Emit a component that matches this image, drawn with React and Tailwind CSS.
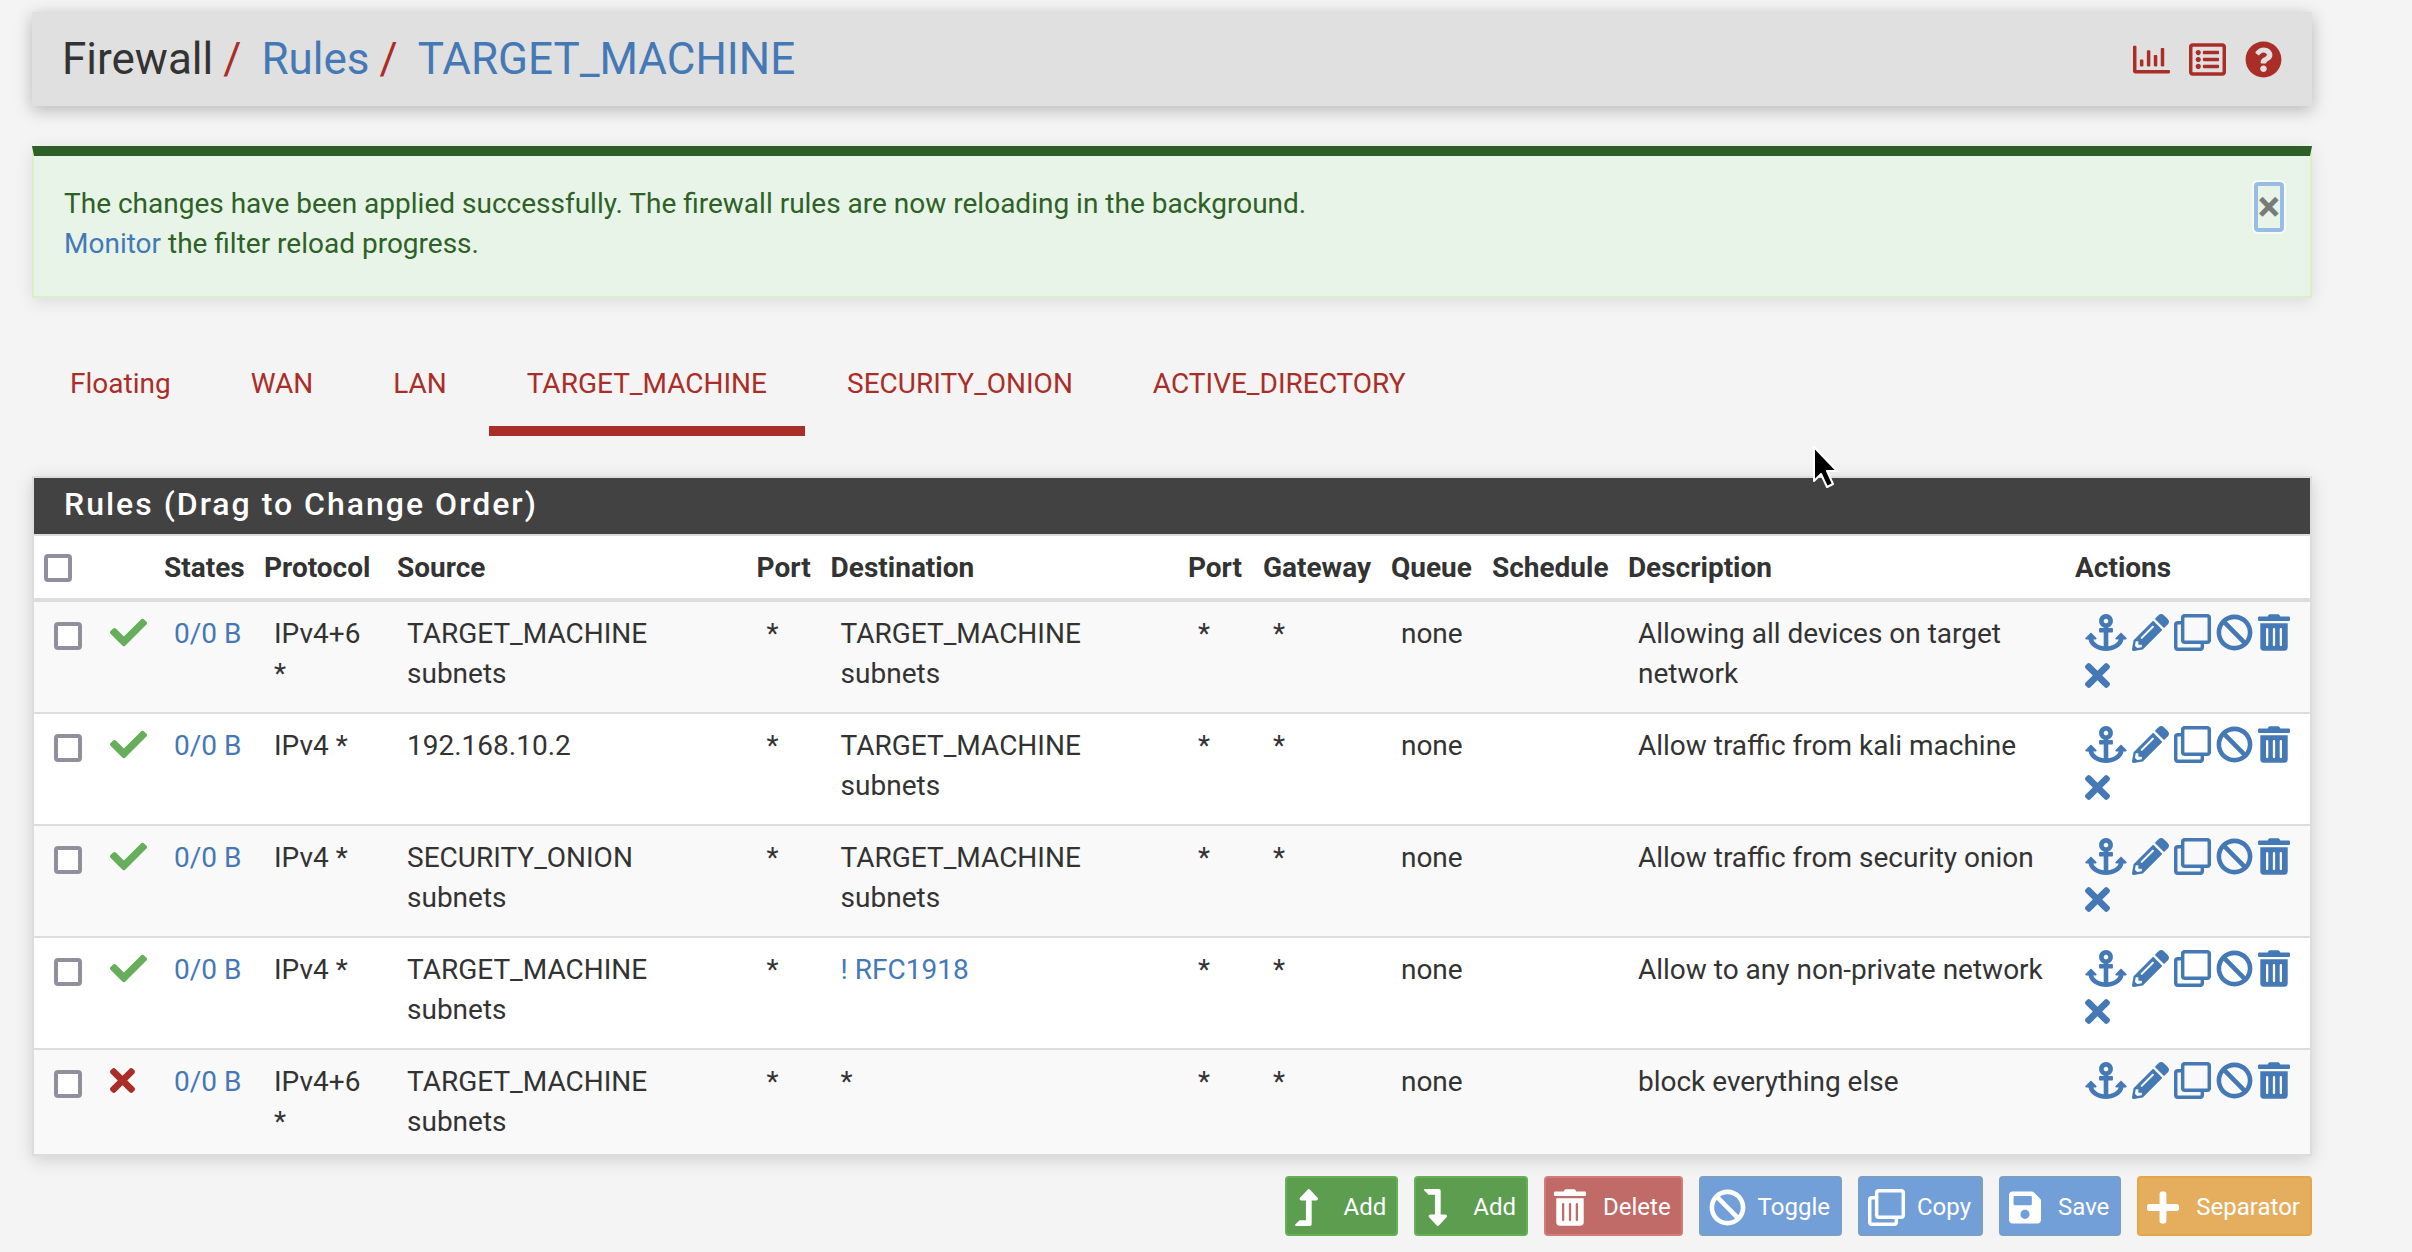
import {
  FaAnchor,
  FaBan,
  FaCheck,
  FaLevelDownAlt,
  FaLevelUpAlt,
  FaPencilAlt,
  FaPlus,
  FaQuestionCircle,
  FaRegChartBar,
  FaRegClone,
  FaRegListAlt,
  FaSave,
  FaTimes,
  FaTrashAlt,
} from "react-icons/fa";

const tabs = ["Floating", "WAN", "LAN", "TARGET_MACHINE", "SECURITY_ONION", "ACTIVE_DIRECTORY"];

const columns = [
  { label: "States", width: "w-[100px]" },
  { label: "Protocol", width: "w-[133px]" },
  { label: "Source", width: "w-[15.8%]" },
  { label: "Port", width: "w-[74px]" },
  { label: "Destination", width: "w-[15.7%]" },
  { label: "Port", width: "w-[75px]" },
  { label: "Gateway", width: "w-[128px]" },
  { label: "Queue", width: "w-[101px]" },
  { label: "Schedule", width: "w-[136px]" },
  { label: "Description", width: "" },
  { label: "Actions", width: "w-[245px]" },
];

const rules = [
  { pass: true, protocol: "IPv4+6 *", source: "TARGET_MACHINE subnets", destination: "TARGET_MACHINE subnets", description: "Allowing all devices on target network" },
  { pass: true, protocol: "IPv4 *", source: "192.168.10.2", destination: "TARGET_MACHINE subnets", description: "Allow traffic from kali machine" },
  { pass: true, protocol: "IPv4 *", source: "SECURITY_ONION subnets", destination: "TARGET_MACHINE subnets", description: "Allow traffic from security onion" },
  { pass: true, protocol: "IPv4 *", source: "TARGET_MACHINE subnets", destination: "! RFC1918", link: true, description: "Allow to any non-private network" },
  { pass: false, protocol: "IPv4+6 *", source: "TARGET_MACHINE subnets", destination: "*", description: "block everything else" },
];

const actions = [
  { label: "Add", name: "Add rule to the top", Icon: FaLevelUpAlt, size: "w-[23px]", color: "bg-[#5c9d50] border-[#65b057]" },
  { label: "Add", name: "Add rule to the end", Icon: FaLevelDownAlt, size: "w-[23px]", color: "bg-[#5c9d50] border-[#65b057]" },
  { label: "Delete", name: "Delete", Icon: FaTrashAlt, size: "w-[32px]", color: "bg-[#c16b68] border-[#d37b76]" },
  { label: "Toggle", name: "Toggle", Icon: FaBan, size: "w-[37px]", color: "bg-[#739fd9] border-[#7a9fc4]" },
  { label: "Copy", name: "Copy", Icon: FaRegClone, size: "w-[37px]", color: "bg-[#739fd9] border-[#7a9fc4]" },
  { label: "Save", name: "Save", Icon: FaSave, size: "w-[32px]", color: "bg-[#739fd9] border-[#7a9fc4]" },
  { label: "Separator", name: "Separator", Icon: FaPlus, size: "w-[32px]", color: "bg-[#e5ae5f] border-[#e5a54b]" },
];

const rowActions = [
  { name: "Add associated states", Icon: FaAnchor, size: "w-[42px]" },
  { name: "Edit", Icon: FaPencilAlt, size: "w-[37px]" },
  { name: "Copy", Icon: FaRegClone, size: "w-[37px]" },
  { name: "Disable", Icon: FaBan, size: "w-[37px]" },
  { name: "Delete", Icon: FaTrashAlt, size: "w-[32px]" },
];

function IconLink({ name, Icon, size = "w-[37px]" }) {
  return (
    <a href="#" aria-label={name} title={name} className="block">
      <Icon className={`${size} h-[37px]`} />
    </a>
  );
}

function CheckBox({ label }) {
  return (
    <input
      type="checkbox"
      aria-label={label}
      className="block size-7 appearance-none rounded-sm border-4 border-[#8f8f9d] bg-white checked:bg-[#4479b6]"
    />
  );
}

function Cursor() {
  return (
    <svg viewBox="0 0 27 44" className="pointer-events-none absolute -top-[33px] right-[471px] h-11 w-[27px]" aria-hidden="true">
      <path d="M2 2v34l7-7 6 13 6-3-6-13h10z" fill="#000" stroke="#fff" strokeWidth="2" strokeLinejoin="round" />
    </svg>
  );
}

export default function App() {
  return (
    <div className="min-h-screen bg-[#f4f4f4] pt-3 pr-[100px] pb-4 pl-8 font-[Roboto,sans-serif] text-[28px] leading-10 text-[#333]">
      <header className="flex items-center justify-between bg-[#e0e0e0] py-[22px] pr-[30px] pl-[30px] shadow-[0_4px_16px_rgba(0,0,0,0.26)]">
        <h1 className="flex text-[44px] leading-[50px]">
          <span>Firewall</span>
          <span className="mr-5 ml-2.5 text-[#aa2e28]">/</span>
          <a href="#" className="text-[#4479b6]">Rules</a>
          <span className="mr-5 ml-2.5 text-[#aa2e28]">/</span>
          <a href="#" className="text-[#4479b6]">TARGET_MACHINE</a>
        </h1>
        <nav className="flex gap-[19px] text-[#aa2e28]" aria-label="Page tools">
          <IconLink name="Status" Icon={FaRegChartBar} />
          <IconLink name="Log" Icon={FaRegListAlt} />
          <IconLink name="Help" Icon={FaQuestionCircle} />
        </nav>
      </header>

      <div
        role="alert"
        className="mt-10 flex items-start justify-between border-2 border-t-[10px] border-[#dcedc8] border-t-[#2d5f26] bg-[#e8f4e8] pt-7 pr-[26px] pb-8 pl-[30px] text-[#2d6126] shadow-[0_4px_16px_rgba(0,0,0,0.1)]"
      >
        <p>
          The changes have been applied successfully. The firewall rules are now reloading in the background.
          <br />
          <a href="#" className="text-[#4479b6]">Monitor</a> the filter reload progress.
        </p>
        <button
          type="button"
          aria-label="Close"
          className="-mt-0.5 h-[50px] w-[30px] rounded-sm border-4 border-[#99bce5] text-center text-[42px] leading-[42px] font-bold text-[#777d76] outline-2 outline-white/60"
        >
          <span className="-mx-2 block">×</span>
        </button>
      </div>

      <nav className="mt-11 flex gap-1" aria-label="Interfaces">
        {tabs.map((tab) => (
          <a
            key={tab}
            href="#"
            aria-current={tab === "TARGET_MACHINE" ? "page" : undefined}
            className={
              tab === "TARGET_MACHINE"
                ? "border-b-[10px] border-[#aa2e28] px-[38px] py-[22px] text-[#aa2e28]"
                : "border-b-[10px] border-transparent px-[38px] py-[22px] text-[#aa2e28]"
            }
          >
            {tab}
          </a>
        ))}
      </nav>

      <section className="relative mt-10 border-2 border-[#dddddd] bg-white shadow-[0_4px_16px_rgba(0,0,0,0.15)]">
        <Cursor />
        <h2 className="border-b-2 border-[#dddddd] bg-[#424242] pt-1 pb-2 pl-[30px]">
          <span className="block text-[32px] leading-[44px] font-medium tracking-[2px] text-white">Rules (Drag to Change Order)</span>
        </h2>
        <table className="w-full table-fixed border-collapse text-left">
          <thead>
            <tr className="border-b-4 border-[#dddddd]">
              <th className="w-[56px] pt-3 pb-2.5 pl-2.5">
                <CheckBox label="Select all rules" />
              </th>
              <th className="w-[64px]" />
              {columns.map((c, i) => (
                <th key={i} className={`${c.width} pt-3 pb-2.5 pl-2.5 font-bold`}>
                  {c.label}
                </th>
              ))}
            </tr>
          </thead>
          <tbody>
            {rules.map((r, i) => (
              <tr key={i} className="border-b-2 border-[#dddddd] align-top odd:bg-[#f9f9f9] last:border-b-0">
                <td className="pt-5 pl-5">
                  <CheckBox label={`Select rule ${i + 1}`} />
                </td>
                <td className="pt-3 pl-5">
                  {r.pass ? (
                    <FaCheck className="h-[37px] w-[37px] text-[#66ae5b]" title="Pass" />
                  ) : (
                    <FaTimes className="h-[37px] w-[25px] text-[#aa2e28]" title="Block" />
                  )}
                </td>
                <td className="py-3 pl-5">
                  <a href="#" className="whitespace-nowrap text-[#4479b6]">0/0 B</a>
                </td>
                <td className="py-3 pr-3 pl-5">{r.protocol}</td>
                <td className="py-3 pr-3 pl-5">{r.source}</td>
                <td className="py-3 pl-5">*</td>
                <td className="py-3 pr-3 pl-5">
                  {r.link ? <a href="#" className="text-[#4479b6]">{r.destination}</a> : r.destination}
                </td>
                <td className="py-3 pl-5">*</td>
                <td className="py-3 pl-5">*</td>
                <td className="py-3 pl-5">none</td>
                <td />
                <td className="py-3 pr-3 pl-5">{r.description}</td>
                <td className="pt-3 pl-5 text-[#4479b6]">
                  <div className="flex gap-[5px]">
                    {rowActions.map((a) => (
                      <IconLink key={a.name} name={a.name} Icon={a.Icon} size={a.size} />
                    ))}
                  </div>
                  {r.pass && (
                    <div className="flex pt-1.5 pb-[18px]">
                      <IconLink name="Kill states" Icon={FaTimes} size="w-[25px]" />
                    </div>
                  )}
                </td>
              </tr>
            ))}
          </tbody>
        </table>
      </section>

      <div className="mt-5 flex flex-wrap justify-end gap-4">
        {actions.map(({ label, name, Icon, size, color }) => (
          <button
            key={name}
            type="button"
            aria-label={name}
            className={`${color} flex h-[60px] items-center rounded-sm border-2 pt-0.5 pr-2.5 pl-2 text-2xl text-white`}
          >
            <span className="w-[49px]">
              <Icon className={`${size} h-[37px]`} />
            </span>
            {label}
          </button>
        ))}
      </div>
    </div>
  );
}
